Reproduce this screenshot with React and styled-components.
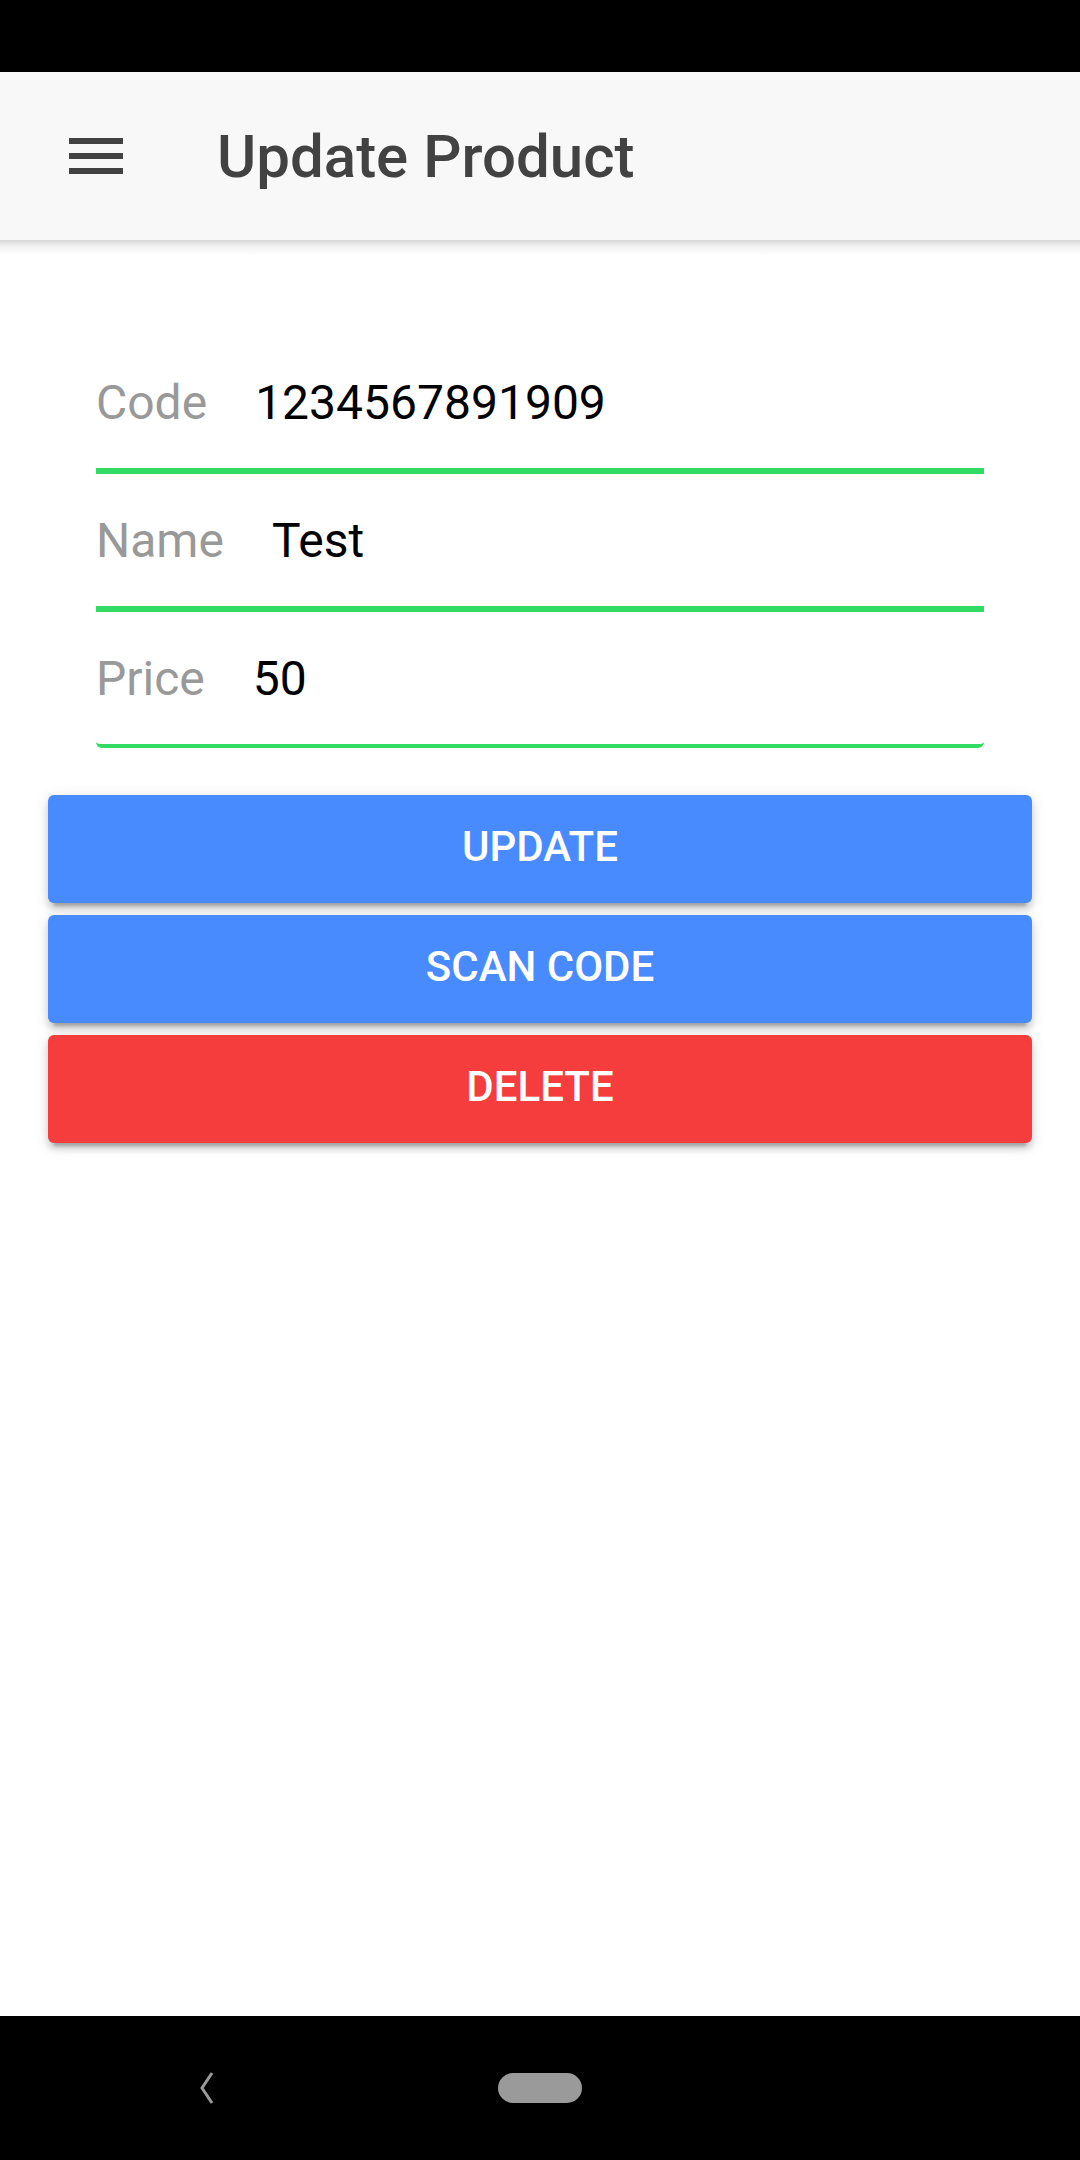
import React from "react";
import styled, { createGlobalStyle } from "styled-components";

const GlobalStyle = createGlobalStyle`
  html, body { margin: 0; padding: 0; background: #fff; }
  body { font-family: Roboto, "Noto Sans", "Liberation Sans", sans-serif; }
  * { box-sizing: border-box; }
`;

const Screen = styled.div`
  width: 1080px;
  height: 2160px;
  display: flex;
  flex-direction: column;
  background: #fff;
  overflow: hidden;
`;

const StatusBar = styled.div`
  height: 72px;
  flex: none;
  background: #000;
`;

const Toolbar = styled.header`
  position: relative;
  z-index: 2;
  height: 168px;
  flex: none;
  display: flex;
  align-items: center;
  padding-left: 60px;
  background: #f8f8f8;
  &::after {
    content: "";
    position: absolute;
    left: 0;
    right: 0;
    bottom: -15px;
    height: 15px;
    background: linear-gradient(to bottom, rgba(0,0,0,0.16), rgba(0,0,0,0.06) 40%, rgba(0,0,0,0));
  }
`;

const MenuButton = styled.button`
  width: 72px;
  height: 72px;
  padding: 0;
  border: none;
  background: transparent;
  display: flex;
  align-items: center;
  justify-content: center;
  color: #424242;
`;

const Title = styled.h1`
  margin: 0 0 0 85px;
  font-family: Roboto, "Liberation Sans", sans-serif;
  font-weight: 500;
  font-size: 60px;
  color: #424242;
  letter-spacing: 0;
`;

const Content = styled.main`
  flex: 1;
  display: flex;
  flex-direction: column;
  padding-top: 96px;
`;

const Form = styled.div`
  margin: 0 96px;
  display: flex;
  flex-direction: column;
`;

const Row = styled.label`
  height: ${(p) => (p.$last ? 136 : 138)}px;
  display: flex;
  align-items: center;
  border-bottom: ${(p) => (p.$last ? 4 : 6)}px solid #32db64;
  border-radius: ${(p) => (p.$last ? "0 0 6px 6px" : "0")};
`;

const Label = styled.span`
  font-family: Roboto, "Liberation Sans", sans-serif;
  font-size: 48px;
  color: #999;
  margin-right: 48px;
`;

const Input = styled.input`
  flex: 1;
  min-width: 0;
  border: none;
  outline: none;
  background: transparent;
  padding: 0;
  margin: 0;
  font-family: Roboto, "Liberation Sans", sans-serif;
  font-size: 48px;
  color: #000;
`;

const Buttons = styled.div`
  margin: 47px 48px 0;
  display: flex;
  flex-direction: column;
  gap: 12px;
`;

const Button = styled.button`
  height: 108px;
  border: none;
  border-radius: 6px;
  padding: 0 0 5px;
  background: ${(p) => (p.$danger ? "#f53d3d" : "#488aff")};
  color: #fff;
  font-family: Roboto, "Liberation Sans", sans-serif;
  font-weight: 500;
  font-size: 42px;
  line-height: 1;
  text-transform: uppercase;
  box-shadow: 0 6px 6px 0 rgba(0,0,0,0.14), 0 9px 3px -6px rgba(0,0,0,0.2), 0 3px 15px 0 rgba(0,0,0,0.12);
`;

const NavBar = styled.nav`
  height: 144px;
  flex: none;
  background: #000;
  display: flex;
  align-items: center;
`;

const NavSlot = styled.div`
  flex: none;
  width: 360px;
  display: flex;
  justify-content: center;
  align-items: center;
  padding-left: ${(p) => p.$shift || 0}px;
`;

const HomePill = styled.div`
  width: 84px;
  height: 30px;
  border-radius: 15px;
  background: #9a9a9a;
`;

export default function App() {
  return (
    <Screen>
      <GlobalStyle />
      <StatusBar />
      <Toolbar>
        <MenuButton aria-label="menu">
          <svg width="72" height="72" viewBox="0 0 512 512" fill="#424242">
            <path d="M64 384h384v-42.666H64V384zm0-106.666h384v-42.667H64v42.667zM64 128v42.666h384V128H64z" />
          </svg>
        </MenuButton>
        <Title>Update Product</Title>
      </Toolbar>
      <Content>
        <Form>
          <Row>
            <Label>Code</Label>
            <Input readOnly defaultValue="1234567891909" />
          </Row>
          <Row>
            <Label>Name</Label>
            <Input readOnly defaultValue="Test" />
          </Row>
          <Row $last>
            <Label>Price</Label>
            <Input readOnly defaultValue="50" />
          </Row>
        </Form>
        <Buttons>
          <Button>Update</Button>
          <Button>Scan Code</Button>
          <Button $danger>Delete</Button>
        </Buttons>
      </Content>
      <NavBar>
        <NavSlot $shift={54}>
          <svg width="24" height="34" viewBox="0 0 24 34">
            <polyline points="17,2 7,17 17,32" fill="none" stroke="#9a9a9a" strokeWidth="3" />
          </svg>
        </NavSlot>
        <NavSlot>
          <HomePill />
        </NavSlot>
        <NavSlot />
      </NavBar>
    </Screen>
  );
}
